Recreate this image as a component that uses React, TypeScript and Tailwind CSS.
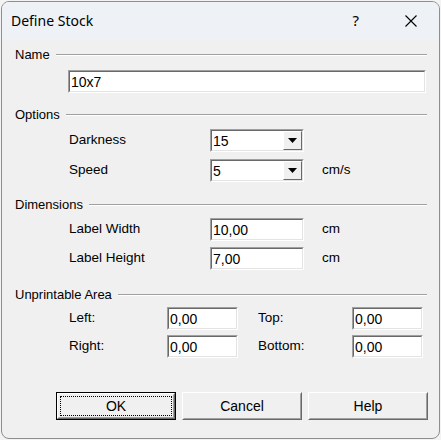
import React from 'react';

const font = { fontFamily: '"Liberation Sans", Arial, sans-serif' };

function SectionHeader({ title }: { title: string }) {
  return (
    <div className="flex items-center h-[17px] text-[13px] text-black">
      <span className="pr-[6px] leading-none">{title}</span>
      <div className="flex-1 flex flex-col">
        <div className="h-px bg-[#a0a0a0]" />
        <div className="h-px bg-white" />
      </div>
    </div>
  );
}

function Field({ value, className }: { value: string; className: string }) {
  return (
    <div className={`shrink-0 border border-t-[#a0a0a0] border-l-[#a0a0a0] border-b-white border-r-white ${className}`}>
      <div className="h-full border border-t-[#696969] border-l-[#696969] border-b-[#e3e3e3] border-r-[#e3e3e3] bg-white flex items-center pl-[1px] text-[14px] text-black leading-none">
        {value}
      </div>
    </div>
  );
}

function Combo({ value }: { value: string }) {
  return (
    <div className="shrink-0 w-[94px] h-[23px] border border-t-[#a0a0a0] border-l-[#a0a0a0] border-b-white border-r-white">
      <div className="h-full border border-t-[#696969] border-l-[#696969] border-b-[#e3e3e3] border-r-[#e3e3e3] bg-white flex items-stretch">
        <div className="flex-1 flex items-center pl-[1px] text-[14px] leading-none text-black">{value}</div>
        <div className="w-[19px] bg-[#f0f0f0] border border-t-white border-l-white border-b-[#696969] border-r-[#696969] flex items-center justify-center">
          <svg width="9" height="5" viewBox="0 0 9 5">
            <path d="M0 0 H9 L4.5 5 Z" fill="#000" />
          </svg>
        </div>
      </div>
    </div>
  );
}

function Button({ label, isDefault }: { label: string; isDefault?: boolean }) {
  return (
    <div className={`shrink-0 w-[120px] h-[28px] ${isDefault ? 'border border-black' : ''}`}>
      <div className="h-full bg-[#f0f0f0] border border-t-white border-l-white border-b-[#696969] border-r-[#696969]">
        <div className="h-full border border-t-[#f0f0f0] border-l-[#f0f0f0] border-b-[#a0a0a0] border-r-[#a0a0a0] p-[1px]">
          <div className={`h-full flex items-center justify-center text-[14px] text-black ${isDefault ? 'border border-dotted border-black' : ''}`}>
            {label}
          </div>
        </div>
      </div>
    </div>
  );
}

export default function App() {
  return (
    <div className="w-[441px] h-[440px] bg-[#f3f3f3] pt-[1px] pl-[1px]" style={font}>
      <div className="w-[439px] h-[438px] rounded-[8px] border border-[#8e8e8e] bg-[#f0f0f0] overflow-hidden flex flex-col">
        {/* title bar */}
        <div className="h-[37px] bg-[#eef2f7] flex items-center shrink-0">
          <span className="pl-[9px] text-[14px] text-black" style={{ fontFamily: '"Noto Sans", "Open Sans", sans-serif' }}>
            Define Stock
          </span>
          <div className="flex-1" />
          <span className="text-[15px] text-black mr-[46px]" style={{ fontFamily: '"Noto Sans", sans-serif' }}>?</span>
          <svg width="12" height="12" viewBox="0 0 12 12" className="mr-[22px]">
            <path d="M0.5 0.5 L11.5 11.5 M11.5 0.5 L0.5 11.5" stroke="#000" strokeWidth="1.1" />
          </svg>
        </div>

        {/* body */}
        <div className="flex-1 pl-[13px] pr-[12px] pt-[7px] text-[13.5px] text-black">
          <SectionHeader title="Name" />
          <Field value="10x7" className="mt-[7px] ml-[53px] mr-px h-[23px]" />

          <div className="mt-[13px]">
            <SectionHeader title="Options" />
          </div>
          <div className="mt-[6px] flex flex-col gap-[7px] pl-[54px]">
            <div className="flex items-center">
              <span className="w-[141px] shrink-0">Darkness</span>
              <Combo value="15" />
            </div>
            <div className="flex items-center">
              <span className="w-[141px] shrink-0">Speed</span>
              <Combo value="5" />
              <span className="ml-[18px]">cm/s</span>
            </div>
          </div>

          <div className="mt-[14px]">
            <SectionHeader title="Dimensions" />
          </div>
          <div className="mt-[5px] flex flex-col gap-[6px] pl-[54px]">
            <div className="flex items-center">
              <span className="w-[141px] shrink-0">Label Width</span>
              <Field value="10,00" className="w-[94px] h-[23px]" />
              <span className="ml-[18px]">cm</span>
            </div>
            <div className="flex items-center">
              <span className="w-[141px] shrink-0">Label Height</span>
              <Field value="7,00" className="w-[94px] h-[23px]" />
              <span className="ml-[18px]">cm</span>
            </div>
          </div>

          <div className="mt-[16px]">
            <SectionHeader title="Unprintable Area" />
          </div>
          <div className="mt-[4px] flex flex-col gap-[5px] pl-[54px]">
            <div className="flex items-center">
              <span className="w-[98px] shrink-0">Left:</span>
              <Field value="0,00" className="w-[71px] h-[23px]" />
              <span className="ml-[20px] w-[94px] shrink-0">Top:</span>
              <Field value="0,00" className="w-[71px] h-[23px]" />
            </div>
            <div className="flex items-center">
              <span className="w-[98px] shrink-0">Right:</span>
              <Field value="0,00" className="w-[71px] h-[23px]" />
              <span className="ml-[20px] w-[94px] shrink-0">Bottom:</span>
              <Field value="0,00" className="w-[71px] h-[23px]" />
            </div>
          </div>

          <div className="mt-[34px] flex gap-[6px] pl-[41px]">
            <Button label="OK" isDefault />
            <Button label="Cancel" />
            <Button label="Help" />
          </div>
        </div>
      </div>
    </div>
  );
}
